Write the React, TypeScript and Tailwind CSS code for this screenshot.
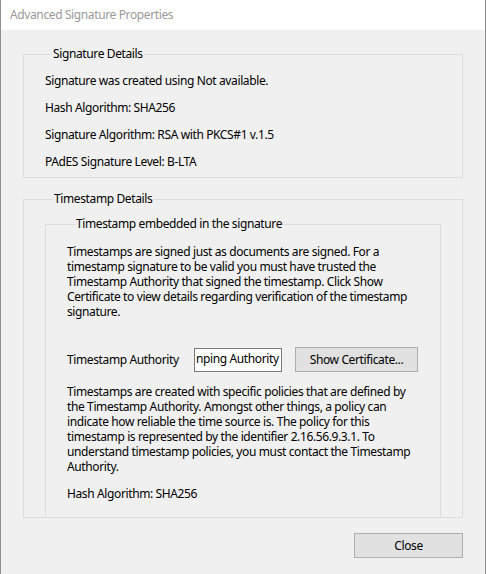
import React from "react";

const font = { fontFamily: '"Noto Sans", "Open Sans", sans-serif' };

export default function App() {
  return (
    <div
      className="w-[486px] h-[574px] flex flex-col bg-[#f0f0f0] border-x border-[#8f8f8f] text-[12px] leading-[16px] tracking-[-0.38px] text-black overflow-hidden"
      style={font}
    >
      {/* Title bar */}
      <div className="h-[30px] shrink-0 bg-white flex items-center pl-[9px] text-[#9a9a9a]">
        Advanced Signature Properties
      </div>

      <div className="flex flex-col px-[22px] pt-[16px]">
        {/* Signature Details */}
        <fieldset className="border border-[#dcdcdc] pl-[21px] pb-[7px]">
          <legend className="ml-[7px] px-[1px]">Signature Details</legend>
          <div className="flex flex-col gap-[11px] mt-[11px]">
            <div>Signature was created using Not available.</div>
            <div>Hash Algorithm: SHA256</div>
            <div>Signature Algorithm: RSA with PKCS#1 v.1.5</div>
            <div>PAdES Signature Level: B-LTA</div>
          </div>
        </fieldset>

        {/* Timestamp Details */}
        <fieldset className="mt-[13px] border border-[#dcdcdc] px-[21px] h-[327px] flex flex-col overflow-hidden">
          <legend className="ml-[8px] px-[1px]">Timestamp Details</legend>
          <fieldset className="mt-[9px] border border-b-0 border-[#dcdcdc] pl-[21px] pr-[10px] flex-1">
            <legend className="ml-[8px] px-[1px]">Timestamp embedded in the signature</legend>
            <p className="mt-[12px] leading-[15px] whitespace-nowrap">
              Timestamps are signed just as documents are signed. For a
              <br />
              timestamp signature to be valid you must have trusted the
              <br />
              Timestamp Authority that signed the timestamp. Click Show
              <br />
              Certificate to view details regarding verification of the timestamp
              <br />
              signature.
            </p>

            <div className="mt-[28px] flex items-center">
              <span className="w-[127px]">Timestamp Authority</span>
              <div className="w-[88px] h-[24px] bg-white border border-[#7a7a7a] overflow-hidden flex items-center pl-[1px] pb-[2px] whitespace-nowrap">
                nping Authority
              </div>
              <button className="ml-[13px] w-[123px] h-[25px] bg-[#e1e1e1] border border-[#adadad] flex items-center justify-center">
                Show Certificate...
              </button>
            </div>

            <p className="mt-[12px] leading-[15px] whitespace-nowrap">
              Timestamps are created with specific policies that are defined by
              <br />
              the Timestamp Authority. Amongst other things, a policy can
              <br />
              indicate how reliable the time source is. The policy for this
              <br />
              timestamp is represented by the identifier 2.16.56.9.3.1. To
              <br />
              understand timestamp policies, you must contact the Timestamp
              <br />
              Authority.
            </p>
            <div className="mt-[12px]">Hash Algorithm: SHA256</div>
          </fieldset>
        </fieldset>

        {/* Footer */}
        <div className="mt-[15px] flex justify-end">
          <button className="w-[109px] h-[25px] bg-[#e1e1e1] border border-[#adadad] flex items-center justify-center">
            Close
          </button>
        </div>
      </div>
    </div>
  );
}
